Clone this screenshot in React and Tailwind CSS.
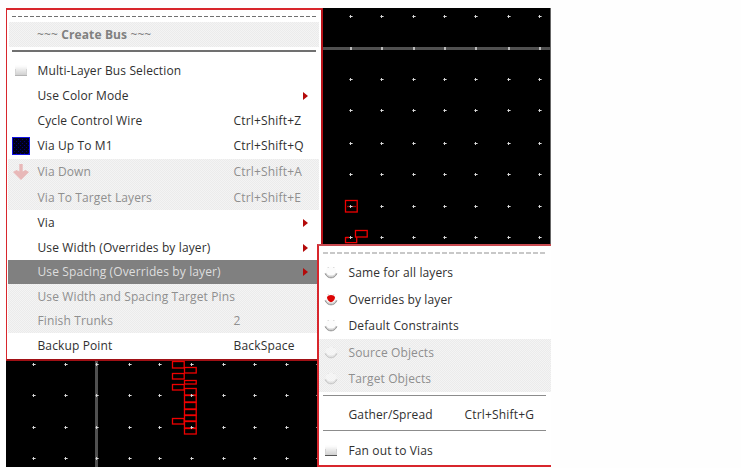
import React from "react";

const DITHER =
  "bg-[repeating-conic-gradient(#ebebeb_0_25%,#f4f4f4_0_50%)] bg-[length:2px_2px]";

const UPPER_X = [350, 381, 413, 444, 475.5, 508, 539];
const UPPER_Y = [16, 79, 110, 143, 174, 206, 237];
const LOWER_X = [33, 65, 96, 129, 159, 191, 223, 254, 286, 317];
const LOWER_Y = [364, 395, 427, 458];

const SHAPES = [
  [345, 200, 12, 12],
  [355, 230, 12, 7],
  [172, 361, 12, 7],
  [184, 367, 12, 6],
  [172, 373, 12, 6],
  [184, 380, 12, 4],
  [172, 384, 12, 6],
  [184, 388, 12, 7],
  [184, 395, 12, 7],
  [184, 402, 12, 7],
  [184, 409, 12, 6],
  [184, 415, 12, 6],
  [184, 421, 12, 7],
  [184, 428, 12, 6],
  [172, 418, 12, 6],
];

function Dot({ x, y }) {
  return (
    <g>
      <rect x={Math.floor(x) - 1} y={y} width="4" height="1" fill="#888" />
      <rect x={Math.floor(x)} y={y - 1} width="1" height="3" fill="#ccc" />
      <rect x={Math.floor(x)} y={y} width="2" height="1" fill="#ddd" />
    </g>
  );
}

function LayoutCanvas() {
  return (
    <svg viewBox="6 8 545 459" width="545" height="459" shapeRendering="crispEdges" className="block">
      <rect x="6" y="8" width="545" height="459" fill="#000" />
      <rect x="323" y="47" width="228" height="3" fill="#505050" />
      <rect x="95" y="360" width="3" height="107" fill="#505050" />
      {UPPER_X.map((x) => (
        <rect key={x} x={Math.floor(x)} y="47" width="2" height="3" fill="#bbb" />
      ))}
      <g shapeRendering="auto" fill="none" stroke="#ee0000" strokeWidth="1.3">
        {SHAPES.map(([x, y, w, h], i) => (
          <rect key={i} x={x + 0.5} y={y + 0.5} width={w - 0.3} height={h - 0.5} />
        ))}
        <path d="M345.5 237V242.6H356.7V237M345.5 237.5H349" />
        <path d="M347 206.5H356" stroke="#a00000" />
      </g>
      {UPPER_Y.map((y) => UPPER_X.map((x) => <Dot key={x + "-" + y} x={x} y={y} />))}
      {LOWER_Y.map((y) => LOWER_X.map((x) => <Dot key={x + "-" + y} x={x} y={y} />))}
      <rect x="550" y="8" width="1" height="459" fill="#666" />
    </svg>
  );
}

function Checkbox({ dark }) {
  return (
    <svg width="12" height="11" viewBox="0 0 12 11">
      <defs>
        <linearGradient id="box" x2="0" y2="1">
          <stop offset="0.1" stopColor="#fdfdfd" />
          <stop offset="1" stopColor="#cccccc" />
        </linearGradient>
      </defs>
      <rect width="12" height="11" fill="url(#box)" />
      <path d="M0.5 4V10.5M11.5 4V10.5" stroke="#d4d4d4" />
      <path d="M0 10.5H12" stroke={dark ? "#555" : "#b4b4b4"} />
    </svg>
  );
}

function Radio({ checked, disabled }) {
  return (
    <svg width="14" height="14" viewBox="0 0 14 14" opacity={disabled ? 0.45 : 1}>
      <circle cx="7" cy="6" r="5.5" fill="#fcfcfc" />
      <path d="M1.5 7C2.5 9.6 5 10.4 7 10.4S11.5 9.6 12.5 7" fill="none" stroke="#d0d0d0" strokeWidth="1.6" />
      <path d="M1.2 7.6C2.5 10.8 5 11.8 7 11.8S11.5 10.8 12.8 7.6" fill="none" stroke="#8c8c8c" strokeWidth="1" />
      <path d="M3.5 1.5H5M9 1.5H10.5" stroke="#ddd" />
      {checked && <path d="M3 4Q4 2 7 2T11 4Q11 8 7 9.3Q3 8 3 4Z" fill="#dc0505" />}
    </svg>
  );
}

function LayerSwatch() {
  return (
    <svg width="18" height="18" viewBox="0 0 18 18" shapeRendering="crispEdges" className="shrink-0">
      <defs>
        <pattern id="hatch" width="4" height="4" patternUnits="userSpaceOnUse">
          <rect width="4" height="4" fill="#000018" />
          <rect width="1" height="1" fill="#000078" />
          <rect x="2" y="2" width="1" height="1" fill="#000078" />
        </pattern>
      </defs>
      <rect x="0.5" y="0.5" width="17" height="17" fill="url(#hatch)" stroke="#1414e6" />
    </svg>
  );
}

function DownArrow() {
  return (
    <svg width="18" height="18" viewBox="0 0 18 18" className="shrink-0">
      <path d="M7.3 1H10.7V8.5L13.5 7L17 9L9 17L1 9L4.5 7L7.3 8.5Z" fill="#e8b8b8" />
    </svg>
  );
}

function Row({ h, icon, label, shortcut, arrow, disabled, active, className = "", iconPad = "pr-[4px]", keyX = "w-[196px]" }) {
  const tone = active
    ? "bg-[#808080] text-[#dedede]"
    : disabled
      ? DITHER + " text-[#8f8f8f]"
      : "text-[#303030]";
  return (
    <div className={`flex items-center ${h} ${tone} ${className}`}>
      <span className={`flex w-[29.5px] shrink-0 items-center justify-center ${iconPad}`}>{icon}</span>
      <span className={`${keyX} shrink-0 whitespace-nowrap tracking-[0.12px]`}>{label}</span>
      <span className="grow whitespace-nowrap tracking-[0.18px]">{shortcut}</span>
      {arrow && (
        <svg width="5" height="8" viewBox="0 0 5 8" className="mr-[11px] shrink-0">
          <path d="M0 0L5 4L0 8Z" fill="#b40a0a" />
        </svg>
      )}
    </div>
  );
}

function CreateBusMenu() {
  return (
    <div className="absolute left-0 top-0 flex h-[353px] w-[317px] flex-col border-b-2 border-l border-r-2 border-t-2 border-[#d8262c] border-b-[#a01015] border-r-[#b8141a] bg-white pl-px pr-[2px]">
      <div className="ml-[4px] mr-[3px] mt-[6px] h-px bg-[repeating-linear-gradient(90deg,#707070_0_4px,transparent_4px_6px)]" />
      <div className={`ml-px mt-[5px] flex h-[25px] items-center pl-7 font-bold text-[#808080] ${DITHER}`}>
        <span className="whitespace-nowrap tracking-[0.12px]"><span className="font-normal">~~~</span> Create Bus <span className="font-normal">~~~</span></span>
      </div>
      <div className="ml-[4px] mr-[3px] mt-[3px] h-[2px] bg-[#707070]" />
      <Row h="h-[25px]" className="mt-[6px]" icon={<Checkbox />} label="Multi-Layer Bus Selection" />
      <Row h="h-[25px]" label="Use Color Mode" arrow />
      <Row h="h-[25px]" label="Cycle Control Wire" shortcut="Ctrl+Shift+Z" />
      <Row h="h-[26px]" icon={<LayerSwatch />} label="Via Up To M1" shortcut="Ctrl+Shift+Q" />
      <Row h="h-[26px]" icon={<DownArrow />} label="Via Down" shortcut="Ctrl+Shift+A" disabled />
      <Row h="h-[25px]" label="Via To Target Layers" shortcut="Ctrl+Shift+E" disabled />
      <Row h="h-[25px]" label="Via" arrow />
      <Row h="h-[25px]" label="Use Width (Overrides by layer)" arrow />
      <Row h="h-[24px]" label="Use Spacing (Overrides by layer)" arrow active />
      <Row h="h-[25px]" label="Use Width and Spacing Target Pins" disabled />
      <Row h="h-[24px]" label="Finish Trunks" shortcut="2" disabled />
      <Row h="h-[25px]" label="Backup Point" shortcut="BackSpace" />
    </div>
  );
}

function SpacingMenu() {
  return (
    <div className="absolute left-[311px] top-[236px] flex h-[223px] w-[234px] flex-col border-y-2 border-l-2 border-[#d8262c] border-t-[#c84a50] bg-white">
      <div className="ml-[4px] mr-[5px] mt-[6px] h-[2px] bg-[repeating-linear-gradient(90deg,#c8c8c8_0_5px,transparent_5px_7px)]" />
      <Row h="h-[27px]" className="mt-[5px]" icon={<Radio />} label="Same for all layers" keyX="w-[116px]" iconPad="pr-[5px]" />
      <Row h="h-[27px]" icon={<Radio checked />} label="Overrides by layer" keyX="w-[116px]" iconPad="pr-[5px]" />
      <Row h="h-[26px]" icon={<Radio />} label="Default Constraints" keyX="w-[116px]" iconPad="pr-[5px]" />
      <Row h="h-[27px]" icon={<Radio disabled />} label="Source Objects" disabled keyX="w-[116px]" iconPad="pr-[5px]" />
      <Row h="h-[26px]" icon={<Radio disabled />} label="Target Objects" disabled keyX="w-[116px]" iconPad="pr-[5px]" />
      <div className="ml-[4px] mr-[5px] mt-[3px] h-px bg-[#8c8c8c]" />
      <Row h="h-[34px]" className="pt-[3px]" label="Gather/Spread" shortcut="Ctrl+Shift+G" keyX="w-[116px]" />
      <div className="ml-[4px] mr-[5px] h-px bg-[#8c8c8c]" />
      <Row h="h-[34px]" className="pt-[5px]" icon={<Checkbox dark />} label="Fan out to Vias" keyX="w-[116px]" iconPad="pr-[5px]" />
    </div>
  );
}

export default function App() {
  return (
    <div className="h-[468px] w-[741px] overflow-hidden bg-[#fefefe] pl-[6px] pt-2 font-['Open_Sans','Noto_Sans',sans-serif] text-[12px] leading-none">
      <div className="relative h-[459px] w-[545px]">
        <LayoutCanvas />
        <CreateBusMenu />
        <SpacingMenu />
      </div>
    </div>
  );
}
